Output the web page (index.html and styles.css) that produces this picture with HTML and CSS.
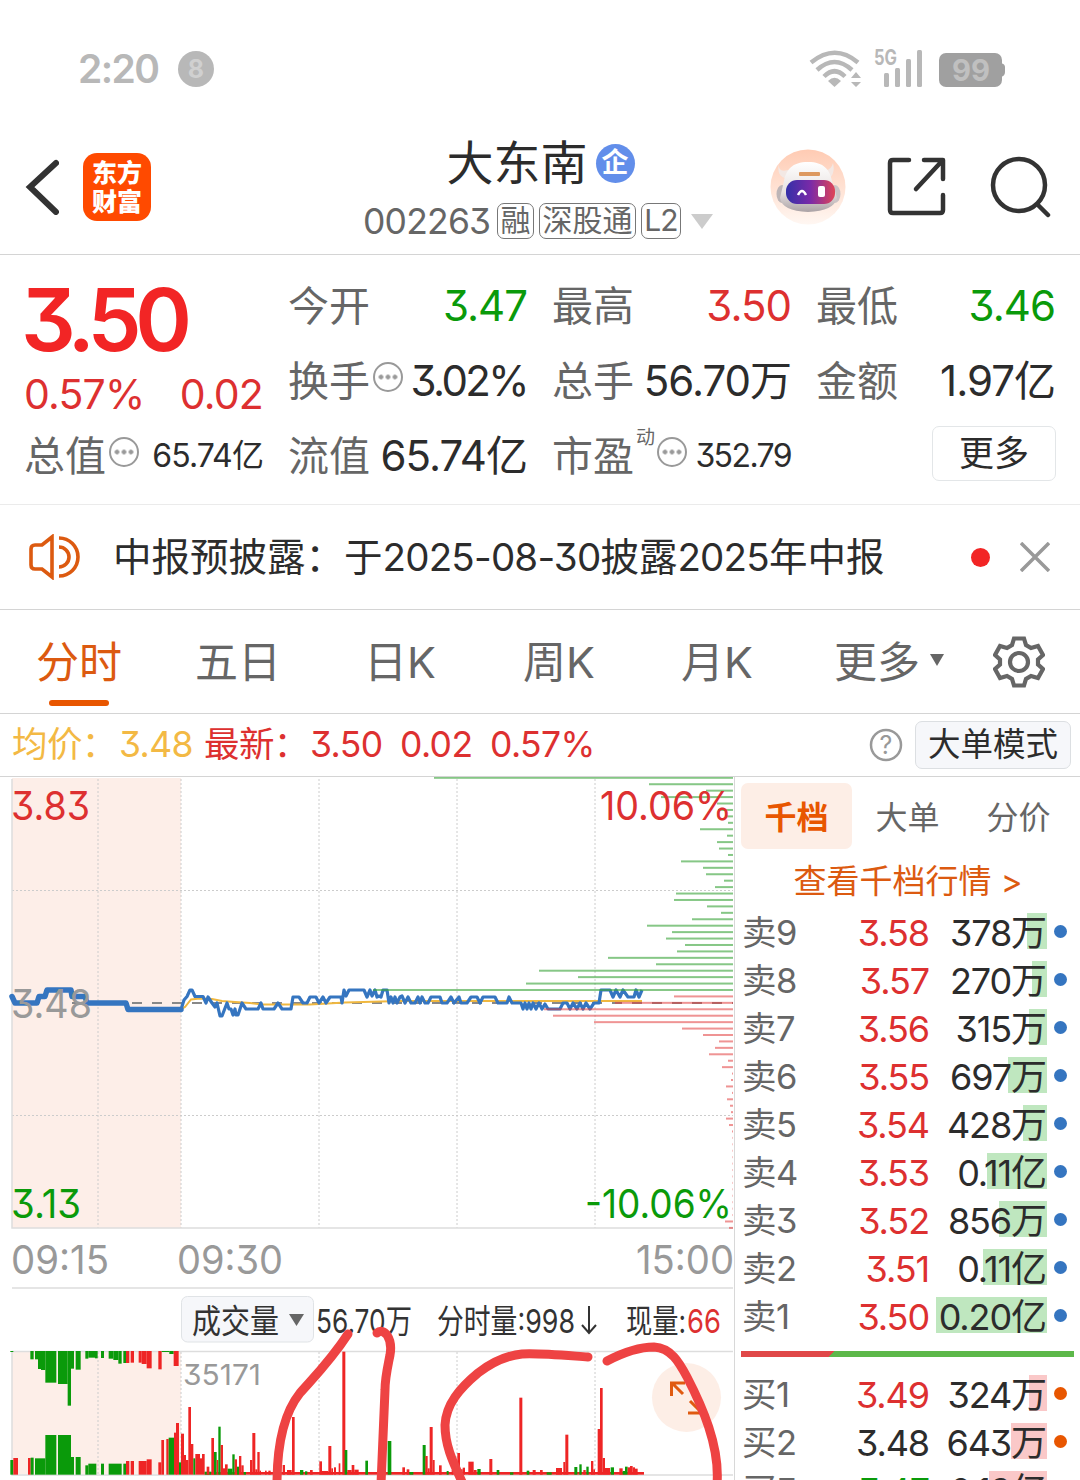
FILE: index.html
```
<!DOCTYPE html>
<html lang="zh-CN">
<head>
  <meta charset="UTF-8">
  <meta name="viewport" content="width=device-width, initial-scale=1.0">
  <title>大东南 002263</title>
  <link rel="stylesheet" href="styles.css">
</head>
<body>
  <div class="status">
    <span class="clock">2:20</span>
    <span class="notif">8</span>
    <svg class="signals" width="200" height="50" viewBox="0 0 200 50">
      <g fill="none" stroke="#b8b8b8" stroke-width="4.5">
        <path d="M3 18.500 Q27 -1 50 18.500"/>
        <path d="M9 26 Q26.500 10 44 26"/>
        <path d="M16 32.500 Q26.500 22 37 32.500"/>
      </g>
      <path d="M20 37 Q26.500 30.500 33 37 L26.500 43Z" fill="#b8b8b8"/>
      <path d="M43 34 L48 28 L53 34Z M43 38 L48 43 L53 38Z" fill="#b8b8b8"/>
      <text x="66" y="21" class="net" textLength="23" lengthAdjust="spacingAndGlyphs">5G</text>
      <g fill="#b8b8b8">
        <rect x="76" y="29" width="5" height="14" rx="1.5"/>
        <rect x="87" y="24" width="5" height="19" rx="1.5"/>
        <rect x="98" y="15" width="5" height="28" rx="1.5"/>
        <rect x="109" y="6" width="5" height="37" rx="1.5"/>
      </g>
      <rect x="131" y="9" width="63" height="34" rx="7" fill="#a0a0a0"/>
      <path d="M193 19 Q197 20 197 23 V28 Q197 32 193 33Z" fill="#a0a0a0"/>
      <text x="144" y="37" class="batt" textLength="38" lengthAdjust="spacingAndGlyphs">99</text>
    </svg>
  </div>

  <header>
    <div class="left">
      <svg width="34" height="56" viewBox="0 0 34 56"><path d="M31 4 L5 28 L31 53" fill="none" stroke="#333" stroke-width="6" stroke-linecap="round"/></svg>
      <div class="logo">东方<br>财富</div>
    </div>
    <div class="stock">
      <div class="name">大东南<span class="badge">企</span></div>
      <div class="code"><b>002263</b><i class="t1">融</i><i class="t3">深股通</i><i class="t2">L2</i><span class="tri"></span></div>
    </div>
    <div class="right">
      <svg class="bot" width="76" height="76" viewBox="0 0 76 76">
        <defs>
          <linearGradient id="peach" x1="0" y1="0" x2="0" y2="1"><stop offset="0" stop-color="#ffcbb3"/><stop offset="1" stop-color="#fff7f2"/></linearGradient>
          <linearGradient id="visor"><stop offset="0" stop-color="#3430a8"/><stop offset=".5" stop-color="#7a2aa8"/><stop offset="1" stop-color="#df4557"/></linearGradient>
          <linearGradient id="helmet" x1="0" y1="0" x2="0" y2="1"><stop offset="0" stop-color="#fff"/><stop offset=".6" stop-color="#e8e2e1"/><stop offset="1" stop-color="#aaa2a5"/></linearGradient>
        </defs>
        <circle cx="38" cy="38" r="37.5" fill="url(#peach)"/>
        <path d="M9 15 Q8 24 18 21 L17 30 Q6 27 9 15Z M63 14 Q66 27 56 31 L54 21 Q61 22 63 14Z" fill="#f3e8e4"/>
        <ellipse cx="12" cy="45" rx="5.500" ry="9" fill="#bdb5b7"/><ellipse cx="65" cy="45" rx="5.500" ry="9" fill="#cbc4c6"/>
        <path d="M38 13 C54 13 60 21 62 32 L67 49 Q64 62 38 63 Q12 62 10 49 L14 32 C16 21 22 13 38 13Z" fill="url(#helmet)"/>
        <rect x="29" y="23" width="21" height="4" rx="1" fill="#dd985f"/>
        <rect x="16" y="31" width="49" height="24" rx="11" fill="url(#visor)"/>
        <path d="M28 46 Q32 38 36 46" fill="none" stroke="#fff" stroke-width="2.500"/>
        <rect x="48" y="37" width="7" height="11" rx="2" fill="#fff"/>
      </svg>
      <svg class="share" width="60" height="60" viewBox="0 0 60 60" fill="none" stroke="#333" stroke-width="4.5" stroke-linecap="round" stroke-linejoin="round">
        <path d="M22 3 H6 Q3 3 3 6 V53 Q3 56 6 56 H53 Q56 56 56 53 V38"/>
        <path d="M37 3 H56 V22 M55 4 L29 32"/>
      </svg>
      <svg width="62" height="62" viewBox="0 0 62 62" fill="none" stroke="#333" stroke-width="4.5" stroke-linecap="round">
        <circle cx="29" cy="29" r="26"/><path d="M48 49 L58 59"/>
      </svg>
    </div>
  </header>

  <section class="quote">
    <div class="main">
      <div class="price">3.50</div>
      <div class="chg"><span>0.57%</span><span>0.02</span></div>
    </div>
    <div class="item"><label>今开</label><span class="green">3.47</span></div>
    <div class="item"><label>最高</label><span class="red">3.50</span></div>
    <div class="item"><label>最低</label><span class="green">3.46</span></div>
    <div class="item"><label>换手</label><em></em><span class="pct">3.02%</span></div>
    <div class="item"><label>总手</label><span>56.70万</span></div>
    <div class="item"><label>金额</label><span>1.97亿</span></div>
    <div class="item"><label>总值</label><em></em><span class="small">65.74亿</span></div>
    <div class="item"><label>流值</label><span>65.74亿</span></div>
    <div class="item"><label>市盈</label><sup>动</sup><em></em><span class="small pe">352.79</span></div>
    <div class="item"><button class="more">更多</button></div>
  </section>

  <section class="notice">
    <svg width="52" height="46" viewBox="0 0 52 46" fill="none" stroke="#dc5a10" stroke-width="3.6">
      <path d="M23 3 L13 11 H6 Q2 11 2 15 V31 Q2 35 6 35 H13 L23 43Z"/>
      <path d="M30 4 A19 19 0 0 1 30 42 M30 13 A10 10 0 0 1 30 33"/>
    </svg>
    <p>中报预披露：于<b>2025-08-30</b>披露<b>2025</b>年中报</p>
    <span class="dot"></span>
    <svg width="30" height="30" viewBox="0 0 30 30"><path d="M1 1 L29 29 M29 1 L1 29" stroke="#999" stroke-width="3.5"/></svg>
  </section>

  <nav>
    <a class="active">分时</a><a>五日</a><a>日K</a><a>周K</a><a>月K</a><a>更多<span class="caret"></span></a>
    <svg width="52" height="52" viewBox="0 0 52 52" fill="none" stroke="#666" stroke-width="4.2">
      <path d="M21 2.500 H31 L33 9 L38 12 L45 10 L50 19 L45 23.500 V28.500 L50 33 L45 42 L38 40 L33 43 L31 49.500 H21 L19 43 L14 40 L7 42 L2 33 L7 28.500 V23.500 L2 19 L7 10 L14 12 L19 9Z"/>
      <circle cx="26" cy="26" r="9"/>
    </svg>
  </nav>

  <div class="avg">
    <span class="yellow a1">均价：</span><span class="yellow a2">3.48</span><span class="red a3">最新：</span><span class="red a4">3.50</span><span class="red a5">0.02</span><span class="red a6">0.57%</span>
    <svg width="34" height="34" viewBox="0 0 34 34"><circle cx="17" cy="17" r="15" fill="none" stroke="#999" stroke-width="2.500"/><text x="17" y="26" text-anchor="middle" class="q">?</text></svg>
    <button class="mode">大单模式</button>
  </div>

  <main>
    <svg id="chart" width="735" height="703" viewBox="0 777 735 703">
      <rect x="12" y="778" width="169" height="450" fill="#fdeee8"/>
      <rect x="12" y="1352" width="169" height="122" fill="#fdeee8"/>
      <g class="grid">
        <path d="M98 779V1228M181 779V1228M319 779V1228M457 779V1228M595 779V1228M12 890.5H733M12 1115.5H733"/>
        <path d="M98 1352V1474M181 1352V1474M319 1352V1474M457 1352V1474M595 1352V1474"/>
      </g>
      <path class="axis" d="M12 779V1228H733M12 1288H733M12 1351.5H733M12 1351V1475H733"/>
      <path d="M72 1003H733" stroke="#888" stroke-width="2" stroke-dasharray="10 10"/>
      <path class="avgline" d="M181 1009L185 1007L191 999.500L200 998.500L212 999L222 1001L235 1002L250 1003L262 1004.500H310L345 1002.500L400 1001H642"/>
      <polyline class="pre" points="12,996.5 15,1003 37,1003 39,996.5 45,996.5 47,990 71,990 72,996.5 85,996.5 87,1003 126,1003 128,1009.5 181,1009.5"/>
      <polyline class="line" points="181,1009.5 184,1000 187,996.5 190,990 192,990 195,996.5 203,996.5 206,1003 208,997 212,1003 215,1007 217,1003 220,1016 222,1016 227,1003 229,1009 231,1009 233,1015 235,1009 236,1015 238,1015 242,1003 246,1009 258,1009 261,1003 263,1009 274,1009 278,1003 282,1009 291,1009 293,997 299,997 303,1003 307,1003 310,997 316,997 319,1003 323,997 326,1003 330,997 341,997 342,1003 344,990 346,996 349,990 364,990 367,997 370,990 372,996 375,990 377,997 379,996 381,997 383,990 387,990 389,1003 391,997 393,1003 395,997 397,1003 400,997 402,996 405,1003 408,997 411,1003 415,1003 418,997 420,1003 422,997 425,1003 428,1003 431,997 440,997 442,1003 447,1003 451,997 454,1003 459,997 461,1003 467,1003 471,997 477,997 480,1003 483,997 495,997 498,1003 507,1003 509,997 512,1003 521,1003 523,1009 525,1003 527,1009 529,1003 531,1009 533,1003 536,1009 539,1003 542,1009 545,1004 548,1009 560,1009 563,1003 567,1003 570,1009 573,1003 577,1009 580,1003 583,1009 586,1003 590,1009 594,1003 599,1003 601,990 610,990 613,997 616,990 620,997 623,990 628,997 634,997 636,990 639,997 642,990"/>
      <g id="depth"></g>
      <g id="vol"></g>
      <g class="scale">
        <text x="11" y="820" textLength="79" lengthAdjust="spacingAndGlyphs" fill="#dd3030">3.83</text>
        <text x="600" y="820" textLength="132" lengthAdjust="spacingAndGlyphs" fill="#dd3030">10.06%</text>
        <text x="11" y="1018" textLength="81" lengthAdjust="spacingAndGlyphs" fill="#999">3.48</text>
        <text x="11" y="1218" textLength="70" lengthAdjust="spacingAndGlyphs" fill="#0a9a0a">3.13</text>
        <text x="585" y="1218" textLength="147" lengthAdjust="spacingAndGlyphs" fill="#0a9a0a">-10.06%</text>
        <text x="11" y="1274" textLength="98" lengthAdjust="spacingAndGlyphs" fill="#999">09:15</text>
        <text x="177" y="1274" textLength="106" lengthAdjust="spacingAndGlyphs" fill="#999">09:30</text>
        <text x="636" y="1274" textLength="98" lengthAdjust="spacingAndGlyphs" fill="#999">15:00</text>
      </g>
      <rect x="181.500" y="1296.500" width="132" height="45.500" rx="6" fill="#f6f7fa" stroke="#e0e3e6"/>
      <path d="M289 1314H304L296.500 1326Z" fill="#666"/>
      <g class="vtext">
        <text x="192" y="1333" textLength="87" lengthAdjust="spacingAndGlyphs">成交量</text>
        <text x="316" y="1333" textLength="96" lengthAdjust="spacingAndGlyphs">56.70万</text>
        <text x="437" y="1333" textLength="138" lengthAdjust="spacingAndGlyphs">分时量:998</text>
        <text x="626" y="1333" textLength="60" lengthAdjust="spacingAndGlyphs">现量:</text>
        <text x="687" y="1333" textLength="34" lengthAdjust="spacingAndGlyphs" class="now">66</text>
      </g>
      <path d="M589 1306V1332M582 1325L589 1333L596 1325" fill="none" stroke="#333" stroke-width="2"/>
      <text x="183" y="1385" class="peak" textLength="78" lengthAdjust="spacingAndGlyphs">35171</text>
      <circle cx="686.500" cy="1397.500" r="34.500" fill="#fdeee6"/>
      <path d="M671.500 1396V1383H685M672 1383L683 1394M688 1413H701V1400M690 1401L701 1412" fill="none" stroke="#e05a10" stroke-width="3"/>
      <g class="mark">
        <path d="M348 1334C331 1360 316 1375 300 1393C284 1413 277 1442 277 1484"/>
        <path d="M377 1333C384 1327 393 1338 390 1355C387 1370 385 1378 385 1390L381 1484"/>
        <path d="M588 1357C560 1355 538 1353 522 1354C502 1356 487 1366 478 1373C460 1388 446 1404 445 1425C445 1446 453 1462 463 1484"/>
        <path d="M607 1361C628 1350 641 1347 654 1347C671 1348 679 1362 687 1377C702 1406 720 1446 717 1484"/>
      </g>
    </svg>

    <aside>
      <div class="tabs"><a class="active">千档</a><a>大单</a><a>分价</a></div>
      <div class="link">查看千档行情 &gt;</div>
      <div id="sell"></div>
      <div class="ratio"></div>
      <div id="buy"></div>
    </aside>
  </main>

  <script>
    const NS = 'http://www.w3.org/2000/svg';
    function rect(parent, x, y, w, h, fill) {
      const r = document.createElementNS(NS, 'rect');
      r.setAttribute('x', x);
      r.setAttribute('y', y);
      r.setAttribute('width', w);
      r.setAttribute('height', h);
      r.setAttribute('fill', fill);
      parent.appendChild(r);
    }

    // Depth lines: left end of each price level, from +10% down
    const depth = [434,649,706,661,717,718,725,728,700,727,717,719,728,681,703,706,724,715,676,674,707,721,692,647,672,666,685,677,608,656,539,578,526,373,
      674,615,544,553,594,682,703,719,715,709,728,722,732,731,726,732,727,730,731,726,729,732,732.5,732.5,732.5,732.5,732.5,732.5,732.5,732.5,732.5,732.5,732.5,732.5,732.5,725,729];
    const depthBox = document.getElementById('depth');
    depth.forEach((x, i) => {
      rect(depthBox, x, 776.8 + i * 6.43, 733 - x, 2, i < 34 ? 'rgba(60,165,60,.62)' : 'rgba(225,60,60,.55)');
    });

    // Volume bars, in thirds of a pixel: [x1, x2, y, colour]
    const G = '#0a9a0a', R = '#ee2525';
    const volBox = document.getElementById('vol');
    const hang = [[31,40,216,G],[91,101,238,G],[105,114,238,G],[114,123,267,G],[123,136,270,G],[136,169,308,G],[174,203,312,G],[203,213,377,G],[213,222,266,G],[227,242,269,G],[256,265,236,G],[265,285,233,G],[285,293,235,G],[303,312,234,G],[326,340,236,G],[340,355,240,G],[355,365,251,G],[370,378,249,G],[378,388,249,R],[392,402,248,R],[416,425,248,R],[425,440,252,R],[440,455,265,R],[475,485,268,R],[485,508,216,G],[508,521,222,G],[521,536,258,R]];
    hang.forEach(b => rect(volBox, b[0] / 3, 1351, (b[1] - b[0]) / 3, (b[2] - 213) / 3, b[3]));

    const bars = [[31,40,540,G],[40,54,534,R],[84,92,534,R],[92,101,533,G],[105,136,535,G],[136,169,465,G],[174,213,465,G],[213,222,531,G],[227,242,531,G],[256,265,556,G],[265,289,551,G],[303,312,551,G],[326,365,551,G],[370,378,551,G],[378,388,543,R],[392,402,543,R],[416,440,543,R],[440,455,538,R],[475,484,547,R],[484,492,480,R],[499,506,477,R],[506,522,473,G],[522,530,458,R],[528,537,429,R],[537,543,547,G],[543,552,461,R],[552,558,525,R],[558,565,540,R],[565,573,381,R],[573,580,492,R],[580,586,535,G],[586,600,522,R],[600,606,535,R],[606,614,522,R],
      [614,1932,576,R],[614,634,575,G],[620,628,560,R],[634,642,474,R],[642,650,516,G],[650,655,540,R],[655,662,440,G],[662,669,495,R],[669,675,565,R],[675,683,553,R],[683,697,566,G],[697,704,523,G],[704,711,538,R],[711,717,560,G],[717,724,528,R],[724,731,556,R],[731,738,576,G],[750,757,540,R],[757,766,459,R],[766,772,568,R],[772,779,516,R],[779,783,572,R],[795,800,572,R],[805,812,572,R],[848,855,555,R],[861,875,570,R],[876,884,411,R],[900,910,570,G],[915,922,574,G],[930,938,570,R],[958,966,544,R],[966,985,573,R],[985,994,498,R],[994,999,565,R],[1002,1008,562,R],[1016,1021,550,R],[1027,1036,215,R],[1034,1042,510,G],[1042,1055,570,R],[1055,1063,555,R],[1063,1076,569,R],[1096,1104,542,G],
      [1163,1174,483,G],[1207,1215,562,R],[1220,1228,568,R],[1228,1240,576,G],[1268,1277,495,G],[1276,1283,528,R],[1283,1289,565,R],[1289,1298,441,R],[1298,1304,540,R],[1317,1325,556,R],[1340,1346,573,G],[1355,1360,570,R],[1372,1380,519,R],[1380,1388,568,R],[1388,1395,563,R],[1405,1421,545,R],[1421,1430,570,R],[1432,1442,567,G],[1468,1477,537,R],[1490,1498,570,G],[1530,1540,577,G],[1558,1567,353,R],[1580,1588,572,G],[1598,1607,570,R],[1620,1628,570,R],[1640,1655,577,G],[1668,1686,564,R],[1690,1696,546,R],[1696,1705,464,R],[1723,1732,561,G],[1738,1745,553,G],[1750,1757,570,R],[1759,1766,560,G],[1773,1780,543,R],[1780,1785,568,R],[1793,1800,447,R],[1800,1808,324,R],[1808,1815,534,R],[1815,1830,564,R],[1832,1842,562,G],[1858,1868,565,R],[1868,1875,573,G],[1875,1883,560,G],[1883,1890,562,R],[1890,1898,558,R],[1898,1905,562,R],[1905,1913,566,R]];
    bars.forEach(b => rect(volBox, b[0] / 3, 1280 + b[2] / 3, (b[1] - b[0]) / 3, (584 - b[2]) / 3, b[3]));

    // Order book
    const sell = [['卖9','3.58','378万',20],['卖8','3.57','270万',15],['卖7','3.56','315万',18],['卖6','3.55','697万',39],['卖5','3.54','428万',24],['卖4','3.53','0.11亿',60],['卖3','3.52','856万',48],['卖2','3.51','0.11亿',64],['卖1','3.50','0.20亿',111]];
    const buy = [['买1','3.49','324万',18],['买2','3.48','643万',36],['买3','3.47','0.19亿',58]];
    function fill(id, rows) {
      document.getElementById(id).innerHTML = rows.map(r => {
        const cls = r[1] > '3.48' ? 'red' : r[1] < '3.48' ? 'green' : '';
        return `<div class="row"><label>${r[0]}</label><span class="${cls}">${r[1]}</span><span class="qty"><i style="width:${r[3]}px"></i>${r[2]}</span><u></u></div>`;
      }).join('');
    }
    fill('sell', sell);
    fill('buy', buy);
  </script>
</body>
</html>
```
FILE: styles.css
```
* {
  box-sizing: border-box;
}
body {
  margin: 0;
  width: 1080px;
  height: 1480px;
  overflow: hidden;
  background: #fff;
  color: #2c2c2c;
  font-family: Inter, 'Noto Sans CJK SC', sans-serif;
  font-feature-settings: "cv09";
}
i, em, u {
  font-style: normal;
  text-decoration: none;
}
button {
  font-family: inherit;
  color: #2c2c2c;
  padding: 0;
}
.red { color: #dd3030; }
.green { color: #0a9a0a; }
.yellow { color: #f3b944; }

.status {
  height: 120px;
  padding: 44px 0 0 78px;
  display: flex;
  align-items: flex-start;
  line-height: 50px;
}
.clock {
  width: 100px;
  font-size: 39px;
  font-weight: 600;
  letter-spacing: -1.6px;
  color: #b8b8b8;
}
.notif {
  width: 36px;
  height: 36px;
  margin-top: 7px;
  border-radius: 50%;
  background: #b8b8b8;
  color: #d0d0d0;
  font-size: 25px;
  font-weight: 700;
  line-height: 36px;
  text-align: center;
}
.signals { margin-left: 594px; }
.net { font-size: 21px; font-weight: 700; fill: #b8b8b8; }
.batt { font-size: 30px; font-weight: 700; fill: #c0c0c0; }

header {
  height: 135px;
  border-bottom: 1px solid #d4d4d4;
  display: grid;
  grid-template-columns: 363px 351px 1fr;
}
.left {
  display: flex;
  align-items: center;
  padding-left: 25px;
  gap: 24px;
}
.logo {
  width: 68px;
  height: 68px;
  border-radius: 14px;
  background: #ff4a00;
  color: #fff;
  font-family: 'Noto Sans CJK SC', sans-serif;
  font-size: 25px;
  font-weight: 900;
  line-height: 29px;
  padding-top: 4px;
  text-align: center;
}
.name {
  height: 76px;
  display: flex;
  justify-content: center;
  align-items: center;
  padding: 10px 0 0 4px;
  font-size: 47px;
  line-height: 60px;
}
.badge {
  width: 39px;
  height: 39px;
  margin-left: 8px;
  border-radius: 50%;
  background: #628eea;
  color: #fff;
  font-size: 27px;
  font-weight: 700;
  line-height: 38px;
  text-align: center;
}
.code {
  display: flex;
  align-items: center;
  margin-top: 7px;
  height: 36px;
  color: #666;
  gap: 5px;
}
.code b {
  width: 129px;
  font-weight: 400;
  font-size: 35.500px;
  letter-spacing: -0.8px;
}
.code i {
  height: 36px;
  border: 1.5px solid #777;
  border-radius: 7px;
  font-size: 30px;
  line-height: 33px;
  text-align: center;
}
.t1 { width: 37px; }
.t3 { width: 97px; }
.t2 { width: 40px; letter-spacing: -1px; }
.tri {
  margin-left: 5px;
  border: 11px solid transparent;
  border-top: 15px solid #ccc;
  border-bottom: 0;
}
.right {
  display: flex;
  align-items: center;
  padding-left: 56px;
}
.share { margin: 0 43px 0 41px; }

.quote {
  height: 250px;
  padding: 13px 25px 0;
  border-bottom: 1px solid #ebebeb;
  display: grid;
  grid-template-columns: repeat(4, 238px);
  grid-auto-rows: 75px;
  column-gap: 26px;
}
.main { grid-row: span 2; color: #dd3030; }
.price {
  height: 101px;
  margin-left: -4px;
  font-size: 86px;
  font-weight: 600;
  line-height: 105px;
  letter-spacing: -6.5px;
  color: #f22525;
}
.chg {
  display: flex;
  justify-content: space-between;
  font-size: 41px;
  line-height: 50px;
  letter-spacing: -0.8px;
  margin-left: -1px;
}
.item {
  display: flex;
  align-items: center;
  font-size: 42px;
  line-height: 60px;
  letter-spacing: -1px;
  white-space: nowrap;
}
.item label {
  margin-left: -1px;
  font-size: 41px;
  letter-spacing: 0;
  color: #666;
}
.item > span { margin-left: auto; }
.item .pct { letter-spacing: -2.600px; }
.item .small { font-size: 32px; letter-spacing: -0.9px; }
.item .pe { letter-spacing: -1.600px; }
.item em {
  width: 30px;
  height: 30px;
  margin: -7px 0 0 3px;
  border: 2.5px solid #999;
  border-radius: 50%;
  background: radial-gradient(circle, #999 2px, transparent 2.6px) 50% 50% / 7px 7px;
  background-clip: content-box;
  padding: 9px 2px;
}
.item sup {
  font-size: 19px;
  letter-spacing: 0;
  line-height: 20px;
  margin: -36px 0 0 2px;
  color: #666;
}
.item sup + em { margin-left: 2px; }
.more {
  width: 124px;
  height: 55px;
  margin: -5px -1px 0 auto;
  font-size: 35px;
  line-height: 50px;
  background: #fff;
  border: 1.5px solid #e3e6e8;
  border-radius: 7px;
}

.notice {
  height: 105px;
  border-bottom: 1px solid #d4d4d4;
  display: flex;
  align-items: center;
  padding-left: 29px;
}
.notice p {
  width: 858px;
  margin: 0 0 0 32px;
  font-size: 38.500px;
  line-height: 60px;
  white-space: nowrap;
}
.notice b {
  font-weight: 400;
  letter-spacing: -0.8px;
}
.dot {
  width: 19px;
  height: 19px;
  margin-right: 30px;
  border-radius: 50%;
  background: #f22525;
}

nav {
  height: 104px;
  border-bottom: 1px solid #d4d4d4;
  display: grid;
  grid-template-columns: 158px 160px 164px 154px 162px 182px 78px;
  justify-items: center;
  align-items: center;
  font-size: 43px;
  line-height: 60px;
  color: #666;
}
nav a {
  position: relative;
  display: flex;
  align-items: center;
}
nav .active { color: #dc5a10; }
nav .active::after {
  content: "";
  position: absolute;
  left: 13px;
  bottom: -14px;
  width: 60px;
  height: 6px;
  border-radius: 3px;
  background: #e85600;
}
.caret {
  margin-left: 10px;
  margin-top: -4px;
  border: 7.500px solid transparent;
  border-top: 12px solid #666;
  border-bottom: 0;
}

.avg {
  height: 63px;
  border-bottom: 1px solid #d4d4d4;
  display: flex;
  align-items: center;
  padding-left: 12px;
  font-size: 35.500px;
  line-height: 60px;
  white-space: nowrap;
}
.avg span { letter-spacing: -0.6px; }
.a1 { width: 107px; }
.a2 { width: 85px; }
.a3 { width: 106px; }
.a4 { width: 90px; }
.a5 { width: 90px; }
.avg svg { margin-left: auto; }
.q { font-size: 25px; fill: #999; }
.mode {
  width: 156px;
  height: 48px;
  margin: 0 9px 0 12px;
  font-size: 32.500px;
  line-height: 46px;
  background: #f6f7fa;
  border: 1.5px solid #dcdfe2;
  border-radius: 7px;
}

main { display: flex; height: 703px; }
.grid path { stroke: #ccc; stroke-dasharray: 2 2; fill: none; }
.axis { stroke: #ddd; stroke-width: 1.500; fill: none; }
.avgline { stroke: #f0b840; stroke-width: 2; fill: none; }
.line { stroke: #3575c0; stroke-width: 3.200; fill: none; stroke-linejoin: round; }
.pre { stroke: #3575c0; stroke-width: 5.500; fill: none; stroke-linejoin: round; stroke-linecap: round; }
.scale { font-size: 39.500px; }
.vtext { font-size: 33px; fill: #333; }
.now { fill: #dd3030; }
.peak { font-size: 29px; fill: #999; }
.mark path { fill: none; stroke: #ee4343; stroke-width: 9; stroke-linecap: round; }

aside {
  width: 346px;
  border-left: 1px solid #d8d8d8;
  margin-left: -1px;
  padding-left: 1px;
}
.tabs {
  display: flex;
  padding: 6px 0 0 5px;
  font-size: 32px;
  line-height: 69px;
  text-align: center;
  color: #666;
}
.tabs a { width: 111px; height: 66px; }
.tabs .active {
  color: #e85600;
  font-weight: 700;
  background: #fdeee6;
  border-radius: 7px;
}
.link {
  height: 60px;
  line-height: 64px;
  text-align: center;
  font-size: 33px;
  color: #dc5a10;
}
.row {
  height: 48px;
  display: flex;
  align-items: center;
  font-size: 36px;
  letter-spacing: -1.1px;
  line-height: 48px;
}
.row label { width: 61px; margin-left: 6px; font-size: 34.500px; color: #666; letter-spacing: -0.5px; }
.row span { width: 126px; text-align: right; }
.row .qty { position: relative; width: 117px; }
.qty i {
  position: absolute;
  z-index: -1;
  right: -1px;
  top: 4px;
  height: 36px;
  background: #bfe7bf;
}
#buy .qty i { background: #fac8c8; }
.row u {
  width: 13px;
  height: 13px;
  margin: -4px 0 0 8px;
  border-radius: 50%;
  background: #3575c0;
}
#buy u { background: #e85600; }
.ratio {
  height: 6px;
  margin: 10px 6px 14px 5px;
  background: linear-gradient(135deg, #e04848 66px, #5db84a 66px);
}
```
